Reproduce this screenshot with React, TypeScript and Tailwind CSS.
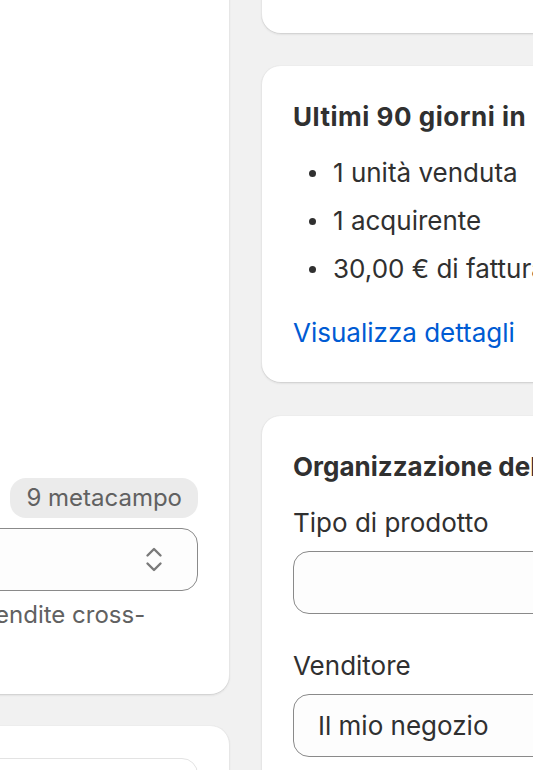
import React from 'react';

const cardClass =
    'bg-white rounded-[20px] shadow-[inset_0_-1px_0_0_#d4d4d4,inset_1px_0_0_0_#e6e6e6,inset_-1px_0_0_0_#e6e6e6,inset_0_1px_0_0_#ededed,0_1px_2px_0_rgba(0,0,0,0.06)]';

const SelectIcon: React.FC = () => (
    <svg width="18" height="27" viewBox="0 0 18 27" fill="none" stroke="#7a7a7a" strokeWidth="2.4" strokeLinecap="round" strokeLinejoin="round">
        <path d="M2.5 9.5 L9 3 L15.5 9.5" />
        <path d="M2.5 17.5 L9 24 L15.5 17.5" />
    </svg>
);

const Field: React.FC<{ label: string; value?: string }> = ({ label, value }) => (
    <div className="flex flex-col">
        <label className="text-[26px] leading-[40px] text-[#303030] mb-2">{label}</label>
        <div className="h-[63px] w-full rounded-[16px] border border-[#8a8a8a] bg-[#fdfdfd] flex items-center px-6 text-[26px] text-[#303030]">
            {value}
        </div>
    </div>
);

export default function App() {
    const stats = ['1 unità venduta', '1 acquirente', '30,00 € di fatturato'];

    return (
        <div className="w-[533px] h-[770px] overflow-hidden bg-[#f1f1f1] font-['Inter',sans-serif]">
            <div className="flex items-start gap-[31px] ml-[-258px] -mt-[40px]">
                {/* left column */}
                <div className="w-[488px] shrink-0 flex flex-col gap-[30px]">
                    <div className={`${cardClass} h-[735px] px-8 pb-8 flex flex-col justify-end`}>
                        <div className="flex items-center justify-between">
                            <span className="text-[26px] leading-[40px] text-[#303030]">Categoria</span>
                            <span className="rounded-[16px] bg-[#ebebeb] px-4 py-1 text-[24px] leading-[32px] text-[#616161]">
                                9 metacampo
                            </span>
                        </div>
                        <div className="mt-[10px] h-[63px] rounded-[16px] border border-[#8a8a8a] bg-[#fdfdfd] flex items-center justify-end pr-[34px]">
                            <SelectIcon />
                        </div>
                        <p className="mt-[8px] text-[24px] leading-[32px] text-[#616161]">
                            <span className="block whitespace-nowrap">Migliora i filtri e le vendite cross-</span>
                            <span className="block whitespace-nowrap">channel.</span>
                        </p>
                    </div>
                    <div className={`${cardClass} h-[200px] px-8 pt-[33px]`}>
                        <div className="h-[120px] rounded-[16px] border-[1.5px] border-[#e3e3e3]" />
                    </div>
                </div>

                {/* right column */}
                <div className="w-[420px] shrink-0 flex flex-col gap-[31px]">
                    <div className={`${cardClass} h-[74px]`} />

                    <div className={`${cardClass} px-8 pt-8 pb-[30px] flex flex-col`}>
                        <h2 className="text-[26px] leading-[40px] font-bold tracking-[0.02em] text-[#303030] whitespace-nowrap">
                            Ultimi 90 giorni in Negozio online
                        </h2>
                        <ul className="mt-4 flex flex-col gap-2">
                            {stats.map((s) => (
                                <li key={s} className="flex items-center gap-[17px] pl-4 text-[26px] leading-[40px] text-[#303030] whitespace-nowrap">
                                    <span className="w-[7px] h-[7px] rounded-full bg-[#303030] shrink-0" />
                                    {s}
                                </li>
                            ))}
                        </ul>
                        <a className="mt-6 text-[26px] leading-[40px] text-[#005bd3] whitespace-nowrap">Visualizza dettagli</a>
                    </div>

                    <div className={`${cardClass} mt-[1px] px-8 pt-8 pb-8 flex flex-col`}>
                        <h2 className="text-[26px] leading-[40px] font-bold text-[#303030] whitespace-nowrap mb-4">
                            Organizzazione del prodotto
                        </h2>
                        <div className="flex flex-col gap-8">
                            <Field label="Tipo di prodotto" />
                            <Field label="Venditore" value="Il mio negozio" />
                            <Field label="Collezioni" />
                        </div>
                    </div>
                </div>
            </div>
        </div>
    );
}
